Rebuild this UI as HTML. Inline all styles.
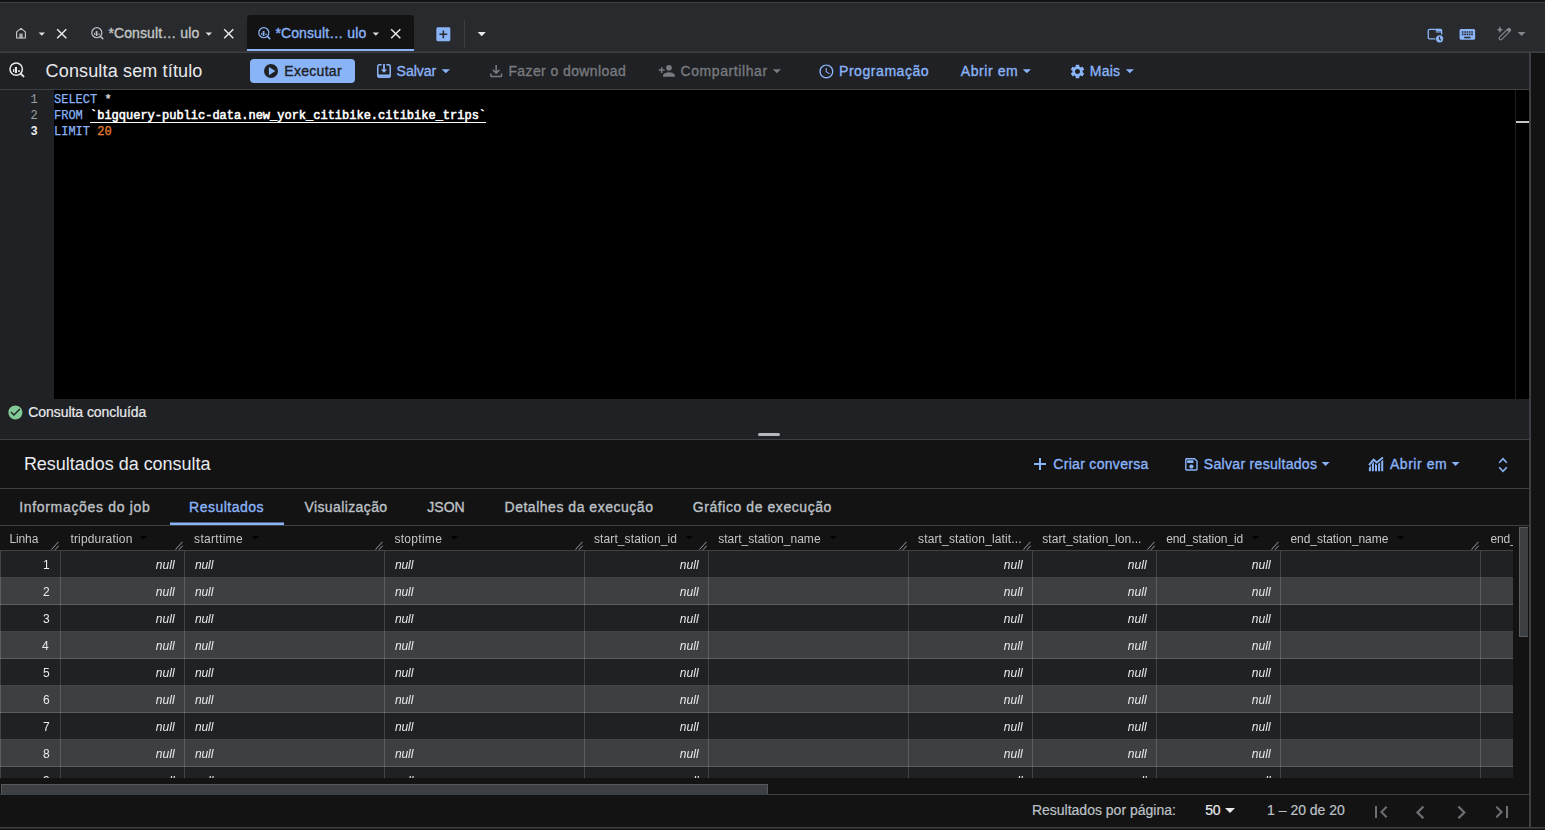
<!DOCTYPE html>
<html lang="pt-BR"><head><meta charset="utf-8"><title>BigQuery</title>
<style>
html,body{margin:0;padding:0;background:#131314;}
body{width:1545px;height:830px;position:relative;overflow:hidden;font-family:"Liberation Sans",sans-serif;}
.r{position:absolute;display:block;}
.t{position:absolute;white-space:pre;line-height:1em;font-family:"Liberation Sans",sans-serif;}
#tbl{position:absolute;left:0;top:526px;width:1513px;height:252px;overflow:hidden;will-change:transform;}
#tbl>div{position:absolute;left:0;top:-526px;width:1700px;height:830px;}
</style></head><body>

<div class="r" style="left:0px;top:0px;width:1545px;height:830px;background:#131314;"></div>
<div class="r" style="left:0px;top:2px;width:1545px;height:1px;background:#3c4043;"></div>
<div class="r" style="left:0px;top:3px;width:1545px;height:48px;background:#292a2d;"></div>
<div class="r" style="left:0px;top:51px;width:1545px;height:1px;background:#333538;"></div>
<div class="r" style="left:0px;top:52px;width:1545px;height:1px;background:#3c4043;"></div>
<div class="r" style="left:0px;top:53px;width:1529px;height:36px;background:#202124;"></div>
<div class="r" style="left:0px;top:89px;width:1529px;height:1px;background:#3c4043;"></div>
<div class="r" style="left:0px;top:90px;width:54px;height:309px;background:#202124;"></div>
<div class="r" style="left:54px;top:90px;width:1475px;height:309px;background:#000;"></div>
<div class="r" style="left:1515px;top:90px;width:1px;height:309px;background:#1f1f1f;"></div>
<div class="r" style="left:1516px;top:121px;width:13px;height:2px;background:#c4c4c4;"></div>
<div class="r" style="left:0px;top:399px;width:1529px;height:40px;background:#202124;"></div>
<div class="r" style="left:758px;top:433px;width:22px;height:3px;background:#b4b8be;border-radius:1.5px"></div>
<div class="r" style="left:0px;top:439px;width:1529px;height:1px;background:#3c4043;"></div>
<div class="r" style="left:0px;top:488px;width:1529px;height:1px;background:#3c4043;"></div>
<div class="r" style="left:0px;top:525px;width:1529px;height:1px;background:#3c4043;"></div>
<div class="r" style="left:1529px;top:53px;width:2px;height:775px;background:#3c4043;"></div>
<div class="r" style="left:1531px;top:53px;width:14px;height:775px;background:#131313;"></div>
<div class="r" style="left:247px;top:15px;width:167px;height:36px;background:#131313;border-radius:4px 4px 0 0"></div>
<div class="r" style="left:247px;top:49px;width:167px;height:2px;background:#8ab4f8;"></div>
<div class="r" style="left:464px;top:20px;width:1px;height:28px;background:#3c4043;"></div>
<div class="r" style="left:250px;top:59px;width:105px;height:24px;background:#8ab4f8;border-radius:4px"></div>
<div class="r" style="left:170px;top:522px;width:114px;height:1px;background:#4f6486;"></div>
<div class="r" style="left:170px;top:523px;width:114px;height:2px;background:#8ab4f8;"></div>
<div class="r" style="left:90px;top:122px;width:396px;height:1px;background:#ffffff;"></div>
<div class="r" style="left:1034px;top:463px;width:12px;height:2px;background:#8ab4f8;"></div>
<div class="r" style="left:1039px;top:458px;width:2px;height:12px;background:#8ab4f8;"></div>
<div class="r" style="left:1519px;top:527px;width:9px;height:110px;background:#5a5e62;"></div>
<div class="r" style="left:1520px;top:528px;width:8px;height:108px;background:#3c4043;"></div>
<div class="r" style="left:1px;top:784px;width:767px;height:10px;background:#55595d;"></div>
<div class="r" style="left:2px;top:785px;width:765px;height:9px;background:#3c4043;"></div>
<div class="r" style="left:0px;top:794px;width:1529px;height:1px;background:#3c4043;"></div>
<div class="r" style="left:0px;top:827px;width:1545px;height:1px;background:#3c4043;"></div>
<div class="r" style="left:0px;top:828px;width:1545px;height:1px;background:#27292b;"></div>
<div id="tbl"><div>
<div class="r" style="left:0px;top:550px;width:1513px;height:1px;background:#202124;"></div>
<div class="r" style="left:0px;top:551px;width:1513px;height:26px;background:#202124;"></div>
<div class="r" style="left:0px;top:550px;width:1513px;height:1px;background:rgba(255,255,255,0.155);"></div>
<div class="r" style="left:0px;top:577px;width:1513px;height:1px;background:#202124;"></div>
<div class="r" style="left:0px;top:578px;width:1513px;height:26px;background:#3c4043;"></div>
<div class="r" style="left:0px;top:577px;width:1513px;height:1px;background:rgba(255,255,255,0.155);"></div>
<div class="r" style="left:0px;top:604px;width:1513px;height:1px;background:#3c4043;"></div>
<div class="r" style="left:0px;top:605px;width:1513px;height:26px;background:#202124;"></div>
<div class="r" style="left:0px;top:604px;width:1513px;height:1px;background:rgba(255,255,255,0.155);"></div>
<div class="r" style="left:0px;top:631px;width:1513px;height:1px;background:#202124;"></div>
<div class="r" style="left:0px;top:632px;width:1513px;height:26px;background:#3c4043;"></div>
<div class="r" style="left:0px;top:631px;width:1513px;height:1px;background:rgba(255,255,255,0.155);"></div>
<div class="r" style="left:0px;top:658px;width:1513px;height:1px;background:#3c4043;"></div>
<div class="r" style="left:0px;top:659px;width:1513px;height:26px;background:#202124;"></div>
<div class="r" style="left:0px;top:658px;width:1513px;height:1px;background:rgba(255,255,255,0.155);"></div>
<div class="r" style="left:0px;top:685px;width:1513px;height:1px;background:#202124;"></div>
<div class="r" style="left:0px;top:686px;width:1513px;height:26px;background:#3c4043;"></div>
<div class="r" style="left:0px;top:685px;width:1513px;height:1px;background:rgba(255,255,255,0.155);"></div>
<div class="r" style="left:0px;top:712px;width:1513px;height:1px;background:#3c4043;"></div>
<div class="r" style="left:0px;top:713px;width:1513px;height:26px;background:#202124;"></div>
<div class="r" style="left:0px;top:712px;width:1513px;height:1px;background:rgba(255,255,255,0.155);"></div>
<div class="r" style="left:0px;top:739px;width:1513px;height:1px;background:#202124;"></div>
<div class="r" style="left:0px;top:740px;width:1513px;height:26px;background:#3c4043;"></div>
<div class="r" style="left:0px;top:739px;width:1513px;height:1px;background:rgba(255,255,255,0.155);"></div>
<div class="r" style="left:0px;top:766px;width:1513px;height:1px;background:#3c4043;"></div>
<div class="r" style="left:0px;top:767px;width:1513px;height:26px;background:#202124;"></div>
<div class="r" style="left:0px;top:766px;width:1513px;height:1px;background:rgba(255,255,255,0.155);"></div>
<div class="r" style="left:0px;top:793px;width:1513px;height:1px;background:#202124;"></div>
<div class="r" style="left:0px;top:794px;width:1513px;height:26px;background:#3c4043;"></div>
<div class="r" style="left:0px;top:793px;width:1513px;height:1px;background:rgba(255,255,255,0.155);"></div>
<div class="r" style="left:60px;top:551px;width:1px;height:227px;background:rgba(255,255,255,0.155);"></div>
<div class="r" style="left:184px;top:551px;width:1px;height:227px;background:rgba(255,255,255,0.155);"></div>
<div class="r" style="left:384px;top:551px;width:1px;height:227px;background:rgba(255,255,255,0.155);"></div>
<div class="r" style="left:584px;top:551px;width:1px;height:227px;background:rgba(255,255,255,0.155);"></div>
<div class="r" style="left:708px;top:551px;width:1px;height:227px;background:rgba(255,255,255,0.155);"></div>
<div class="r" style="left:908px;top:551px;width:1px;height:227px;background:rgba(255,255,255,0.155);"></div>
<div class="r" style="left:1032px;top:551px;width:1px;height:227px;background:rgba(255,255,255,0.155);"></div>
<div class="r" style="left:1156px;top:551px;width:1px;height:227px;background:rgba(255,255,255,0.155);"></div>
<div class="r" style="left:1280px;top:551px;width:1px;height:227px;background:rgba(255,255,255,0.155);"></div>
<div class="r" style="left:1480px;top:551px;width:1px;height:227px;background:rgba(255,255,255,0.155);"></div>
<div class="r" style="left:0px;top:551px;width:1px;height:227px;background:rgba(255,255,255,0.155);"></div>
<span class="t" style="top:559px;color:#e8eaed;font-size:12px;left:42.90px;">1</span>
<span class="t" style="top:559px;color:#e8eaed;font-size:12px;font-style:italic;left:155.70px;letter-spacing:0.100px;">null</span>
<span class="t" style="top:559px;color:#e8eaed;font-size:12px;font-style:italic;left:194.90px;letter-spacing:-0.067px;">null</span>
<span class="t" style="top:559px;color:#e8eaed;font-size:12px;font-style:italic;left:394.90px;letter-spacing:-0.067px;">null</span>
<span class="t" style="top:559px;color:#e8eaed;font-size:12px;font-style:italic;left:679.70px;letter-spacing:0.100px;">null</span>
<span class="t" style="top:559px;color:#e8eaed;font-size:12px;font-style:italic;left:1003.70px;letter-spacing:0.100px;">null</span>
<span class="t" style="top:559px;color:#e8eaed;font-size:12px;font-style:italic;left:1127.70px;letter-spacing:0.100px;">null</span>
<span class="t" style="top:559px;color:#e8eaed;font-size:12px;font-style:italic;left:1251.70px;letter-spacing:0.100px;">null</span>
<span class="t" style="top:586px;color:#e8eaed;font-size:12px;left:42.90px;">2</span>
<span class="t" style="top:586px;color:#e8eaed;font-size:12px;font-style:italic;left:155.70px;letter-spacing:0.100px;">null</span>
<span class="t" style="top:586px;color:#e8eaed;font-size:12px;font-style:italic;left:194.90px;letter-spacing:-0.067px;">null</span>
<span class="t" style="top:586px;color:#e8eaed;font-size:12px;font-style:italic;left:394.90px;letter-spacing:-0.067px;">null</span>
<span class="t" style="top:586px;color:#e8eaed;font-size:12px;font-style:italic;left:679.70px;letter-spacing:0.100px;">null</span>
<span class="t" style="top:586px;color:#e8eaed;font-size:12px;font-style:italic;left:1003.70px;letter-spacing:0.100px;">null</span>
<span class="t" style="top:586px;color:#e8eaed;font-size:12px;font-style:italic;left:1127.70px;letter-spacing:0.100px;">null</span>
<span class="t" style="top:586px;color:#e8eaed;font-size:12px;font-style:italic;left:1251.70px;letter-spacing:0.100px;">null</span>
<span class="t" style="top:613px;color:#e8eaed;font-size:12px;left:42.90px;">3</span>
<span class="t" style="top:613px;color:#e8eaed;font-size:12px;font-style:italic;left:155.70px;letter-spacing:0.100px;">null</span>
<span class="t" style="top:613px;color:#e8eaed;font-size:12px;font-style:italic;left:194.90px;letter-spacing:-0.067px;">null</span>
<span class="t" style="top:613px;color:#e8eaed;font-size:12px;font-style:italic;left:394.90px;letter-spacing:-0.067px;">null</span>
<span class="t" style="top:613px;color:#e8eaed;font-size:12px;font-style:italic;left:679.70px;letter-spacing:0.100px;">null</span>
<span class="t" style="top:613px;color:#e8eaed;font-size:12px;font-style:italic;left:1003.70px;letter-spacing:0.100px;">null</span>
<span class="t" style="top:613px;color:#e8eaed;font-size:12px;font-style:italic;left:1127.70px;letter-spacing:0.100px;">null</span>
<span class="t" style="top:613px;color:#e8eaed;font-size:12px;font-style:italic;left:1251.70px;letter-spacing:0.100px;">null</span>
<span class="t" style="top:640px;color:#e8eaed;font-size:12px;left:41.90px;">4</span>
<span class="t" style="top:640px;color:#e8eaed;font-size:12px;font-style:italic;left:155.70px;letter-spacing:0.100px;">null</span>
<span class="t" style="top:640px;color:#e8eaed;font-size:12px;font-style:italic;left:194.90px;letter-spacing:-0.067px;">null</span>
<span class="t" style="top:640px;color:#e8eaed;font-size:12px;font-style:italic;left:394.90px;letter-spacing:-0.067px;">null</span>
<span class="t" style="top:640px;color:#e8eaed;font-size:12px;font-style:italic;left:679.70px;letter-spacing:0.100px;">null</span>
<span class="t" style="top:640px;color:#e8eaed;font-size:12px;font-style:italic;left:1003.70px;letter-spacing:0.100px;">null</span>
<span class="t" style="top:640px;color:#e8eaed;font-size:12px;font-style:italic;left:1127.70px;letter-spacing:0.100px;">null</span>
<span class="t" style="top:640px;color:#e8eaed;font-size:12px;font-style:italic;left:1251.70px;letter-spacing:0.100px;">null</span>
<span class="t" style="top:667px;color:#e8eaed;font-size:12px;left:42.90px;">5</span>
<span class="t" style="top:667px;color:#e8eaed;font-size:12px;font-style:italic;left:155.70px;letter-spacing:0.100px;">null</span>
<span class="t" style="top:667px;color:#e8eaed;font-size:12px;font-style:italic;left:194.90px;letter-spacing:-0.067px;">null</span>
<span class="t" style="top:667px;color:#e8eaed;font-size:12px;font-style:italic;left:394.90px;letter-spacing:-0.067px;">null</span>
<span class="t" style="top:667px;color:#e8eaed;font-size:12px;font-style:italic;left:679.70px;letter-spacing:0.100px;">null</span>
<span class="t" style="top:667px;color:#e8eaed;font-size:12px;font-style:italic;left:1003.70px;letter-spacing:0.100px;">null</span>
<span class="t" style="top:667px;color:#e8eaed;font-size:12px;font-style:italic;left:1127.70px;letter-spacing:0.100px;">null</span>
<span class="t" style="top:667px;color:#e8eaed;font-size:12px;font-style:italic;left:1251.70px;letter-spacing:0.100px;">null</span>
<span class="t" style="top:694px;color:#e8eaed;font-size:12px;left:42.90px;">6</span>
<span class="t" style="top:694px;color:#e8eaed;font-size:12px;font-style:italic;left:155.70px;letter-spacing:0.100px;">null</span>
<span class="t" style="top:694px;color:#e8eaed;font-size:12px;font-style:italic;left:194.90px;letter-spacing:-0.067px;">null</span>
<span class="t" style="top:694px;color:#e8eaed;font-size:12px;font-style:italic;left:394.90px;letter-spacing:-0.067px;">null</span>
<span class="t" style="top:694px;color:#e8eaed;font-size:12px;font-style:italic;left:679.70px;letter-spacing:0.100px;">null</span>
<span class="t" style="top:694px;color:#e8eaed;font-size:12px;font-style:italic;left:1003.70px;letter-spacing:0.100px;">null</span>
<span class="t" style="top:694px;color:#e8eaed;font-size:12px;font-style:italic;left:1127.70px;letter-spacing:0.100px;">null</span>
<span class="t" style="top:694px;color:#e8eaed;font-size:12px;font-style:italic;left:1251.70px;letter-spacing:0.100px;">null</span>
<span class="t" style="top:721px;color:#e8eaed;font-size:12px;left:42.90px;">7</span>
<span class="t" style="top:721px;color:#e8eaed;font-size:12px;font-style:italic;left:155.70px;letter-spacing:0.100px;">null</span>
<span class="t" style="top:721px;color:#e8eaed;font-size:12px;font-style:italic;left:194.90px;letter-spacing:-0.067px;">null</span>
<span class="t" style="top:721px;color:#e8eaed;font-size:12px;font-style:italic;left:394.90px;letter-spacing:-0.067px;">null</span>
<span class="t" style="top:721px;color:#e8eaed;font-size:12px;font-style:italic;left:679.70px;letter-spacing:0.100px;">null</span>
<span class="t" style="top:721px;color:#e8eaed;font-size:12px;font-style:italic;left:1003.70px;letter-spacing:0.100px;">null</span>
<span class="t" style="top:721px;color:#e8eaed;font-size:12px;font-style:italic;left:1127.70px;letter-spacing:0.100px;">null</span>
<span class="t" style="top:721px;color:#e8eaed;font-size:12px;font-style:italic;left:1251.70px;letter-spacing:0.100px;">null</span>
<span class="t" style="top:748px;color:#e8eaed;font-size:12px;left:42.90px;">8</span>
<span class="t" style="top:748px;color:#e8eaed;font-size:12px;font-style:italic;left:155.70px;letter-spacing:0.100px;">null</span>
<span class="t" style="top:748px;color:#e8eaed;font-size:12px;font-style:italic;left:194.90px;letter-spacing:-0.067px;">null</span>
<span class="t" style="top:748px;color:#e8eaed;font-size:12px;font-style:italic;left:394.90px;letter-spacing:-0.067px;">null</span>
<span class="t" style="top:748px;color:#e8eaed;font-size:12px;font-style:italic;left:679.70px;letter-spacing:0.100px;">null</span>
<span class="t" style="top:748px;color:#e8eaed;font-size:12px;font-style:italic;left:1003.70px;letter-spacing:0.100px;">null</span>
<span class="t" style="top:748px;color:#e8eaed;font-size:12px;font-style:italic;left:1127.70px;letter-spacing:0.100px;">null</span>
<span class="t" style="top:748px;color:#e8eaed;font-size:12px;font-style:italic;left:1251.70px;letter-spacing:0.100px;">null</span>
<span class="t" style="top:775px;color:#e8eaed;font-size:12px;left:42.90px;">9</span>
<span class="t" style="top:775px;color:#e8eaed;font-size:12px;font-style:italic;left:155.70px;letter-spacing:0.100px;">null</span>
<span class="t" style="top:775px;color:#e8eaed;font-size:12px;font-style:italic;left:194.90px;letter-spacing:-0.067px;">null</span>
<span class="t" style="top:775px;color:#e8eaed;font-size:12px;font-style:italic;left:394.90px;letter-spacing:-0.067px;">null</span>
<span class="t" style="top:775px;color:#e8eaed;font-size:12px;font-style:italic;left:679.70px;letter-spacing:0.100px;">null</span>
<span class="t" style="top:775px;color:#e8eaed;font-size:12px;font-style:italic;left:1003.70px;letter-spacing:0.100px;">null</span>
<span class="t" style="top:775px;color:#e8eaed;font-size:12px;font-style:italic;left:1127.70px;letter-spacing:0.100px;">null</span>
<span class="t" style="top:775px;color:#e8eaed;font-size:12px;font-style:italic;left:1251.70px;letter-spacing:0.100px;">null</span>
<span class="t" style="top:802px;color:#e8eaed;font-size:12px;left:35.90px;">10</span>
<span class="t" style="top:802px;color:#e8eaed;font-size:12px;font-style:italic;left:155.70px;letter-spacing:0.100px;">null</span>
<span class="t" style="top:802px;color:#e8eaed;font-size:12px;font-style:italic;left:194.90px;letter-spacing:-0.067px;">null</span>
<span class="t" style="top:802px;color:#e8eaed;font-size:12px;font-style:italic;left:394.90px;letter-spacing:-0.067px;">null</span>
<span class="t" style="top:802px;color:#e8eaed;font-size:12px;font-style:italic;left:679.70px;letter-spacing:0.100px;">null</span>
<span class="t" style="top:802px;color:#e8eaed;font-size:12px;font-style:italic;left:1003.70px;letter-spacing:0.100px;">null</span>
<span class="t" style="top:802px;color:#e8eaed;font-size:12px;font-style:italic;left:1127.70px;letter-spacing:0.100px;">null</span>
<span class="t" style="top:802px;color:#e8eaed;font-size:12px;font-style:italic;left:1251.70px;letter-spacing:0.100px;">null</span>
<span class="t" style="top:533px;color:#c4c7c5;font-size:12px;left:1490.40px;letter-spacing:-0.085px;">end_station_latitude</span>
</div></div>
<svg class="r" style="left:14px;top:26px;" width="14" height="14" viewBox="0 0 24 24"><path fill="none" stroke="#c4c7c5" stroke-width="2" stroke-linejoin="round" d="M4.5 20.5V10L12 4l7.5 6v10.5z"/><path fill="#c4c7c5" d="M9 13h6v8H9z" opacity=".8"/></svg>
<svg class="r" style="left:34.25px;top:25.5px;" width="15.6" height="15.6" viewBox="0 0 24 24"><path fill="#dadce0" d="M7 10l5 5 5-5z"/></svg>
<svg class="r" style="left:53.26px;top:25.16px;" width="17.49" height="17.49" viewBox="0 0 24 24"><path fill="#e8eaed" d="M19 6.41L17.59 5 12 10.59 6.41 5 5 6.41 10.59 12 5 17.59 6.41 19 12 13.41 17.59 19 19 17.59 13.41 12z"/></svg>
<svg class="r" style="left:90.67px;top:26.75px;" width="12.96" height="12.96" viewBox="0 0 16 16"><circle cx="7.2" cy="7.1" r="6.2" fill="none" stroke="#bdc1c6" stroke-width="1.5"/><path d="M11.8 11.8L14.500 14.400" stroke="#bdc1c6" stroke-width="1.9" stroke-linecap="round"/><path fill="#bdc1c6" d="M4 7h1.200v3H4zM5.900 5h2.100v6H5.900zM9.200 8.100h1.500v1.900H9.200z"/></svg>
<svg class="r" style="left:201.15px;top:25.5px;" width="15.6" height="15.6" viewBox="0 0 24 24"><path fill="#dadce0" d="M7 10l5 5 5-5z"/></svg>
<svg class="r" style="left:220.16px;top:25.16px;" width="17.49" height="17.49" viewBox="0 0 24 24"><path fill="#e8eaed" d="M19 6.41L17.59 5 12 10.59 6.41 5 5 6.41 10.59 12 5 17.59 6.41 19 12 13.41 17.59 19 19 17.59 13.41 12z"/></svg>
<svg class="r" style="left:257.67px;top:26.75px;" width="12.96" height="12.96" viewBox="0 0 16 16"><circle cx="7.2" cy="7.1" r="6.2" fill="none" stroke="#8ab4f8" stroke-width="1.5"/><path d="M11.8 11.8L14.500 14.400" stroke="#8ab4f8" stroke-width="1.9" stroke-linecap="round"/><path fill="#8ab4f8" d="M4 7h1.200v3H4zM5.900 5h2.100v6H5.900zM9.200 8.100h1.500v1.900H9.200z"/></svg>
<svg class="r" style="left:368.25px;top:25.5px;" width="15.6" height="15.6" viewBox="0 0 24 24"><path fill="#dadce0" d="M7 10l5 5 5-5z"/></svg>
<svg class="r" style="left:387.26px;top:25.16px;" width="17.49" height="17.49" viewBox="0 0 24 24"><path fill="#e8eaed" d="M19 6.41L17.59 5 12 10.59 6.41 5 5 6.41 10.59 12 5 17.59 6.41 19 12 13.41 17.59 19 19 17.59 13.41 12z"/></svg>
<svg class="r" style="left:433.57px;top:24.57px;" width="18.67" height="18.67" viewBox="0 0 24 24"><path fill="#8ab4f8" d="M19 3H5c-1.11 0-2 .9-2 2v14c0 1.1.89 2 2 2h14c1.1 0 2-.9 2-2V5c0-1.1-.9-2-2-2zm-2 10h-4v4h-2v-4H7v-2h4V7h2v4h4v2z"/></svg>
<svg class="r" style="left:472.13px;top:23.6px;" width="19.44" height="19.44" viewBox="0 0 24 24"><path fill="#e8eaed" d="M7 10l5 5 5-5z"/></svg>
<svg class="r" style="left:1427px;top:27.6px;" width="17" height="16" viewBox="0 0 17 16"><path fill="none" stroke="#8ab4f8" stroke-width="1.3" d="M8.6 10.95H2.6A1.35 1.35 0 0 1 1.25 9.6V2.7A1.35 1.35 0 0 1 2.6 1.35H13.3A1.35 1.35 0 0 1 14.65 2.7V6.6"/><path fill="#8ab4f8" d="M8.8 .9h5.6v2.6H8.8z"/><path fill="#8ab4f8" opacity=".55" d="M8.8 3.5h5.6v1.4H8.8z"/><circle cx="12.6" cy="10.8" r="3.6" fill="#8ab4f8"/><path d="M12.5 8.7v2.3l1.5 1.3" stroke="#292a2d" stroke-width="1.1" fill="none"/></svg>
<svg class="r" style="left:1457.64px;top:24.8px;" width="18.72" height="18.72" viewBox="0 0 24 24"><path fill="#8ab4f8" d="M20 5H4c-1.1 0-1.99.9-1.99 2L2 17c0 1.1.9 2 2 2h16c1.1 0 2-.9 2-2V7c0-1.1-.9-2-2-2zm-9 3h2v2h-2V8zm0 3h2v2h-2v-2zM8 8h2v2H8V8zm0 3h2v2H8v-2zm-1 2H5v-2h2v2zm0-3H5V8h2v2zm9 7H8v-2h8v2zm0-4h-2v-2h2v2zm0-3h-2V8h2v2zm3 3h-2v-2h2v2zm0-3h-2V8h2v2z"/></svg>
<svg class="r" style="left:1495px;top:24px;" width="18" height="18" viewBox="0 0 18 18"><path fill="#80868b" d="M4.95 2.3000000000000003Q5.45 5.2 8.35 5.7Q5.45 6.2 4.95 9.1Q4.45 6.2 1.5500000000000003 5.7Q4.45 5.2 4.95 2.3000000000000003Z"/><g transform="translate(9.8 10.15) rotate(-45)"><rect x="-7.4" y="-1.55" width="14.8" height="3.1" rx="1.55" fill="none" stroke="#80868b" stroke-width="1.2"/><path fill="#80868b" d="M4.2 -1.55h1.700a1.550 1.550 0 0 1 0 3.100h-1.700z"/></g></svg>
<svg class="r" style="left:1512.4px;top:23.8px;" width="19.2" height="19.2" viewBox="0 0 24 24"><path fill="#80868b" d="M7 10l5 5 5-5z"/></svg>
<svg class="r" style="left:9.0px;top:62.0px;" width="16.0" height="16.0" viewBox="0 0 16 16"><circle cx="7.2" cy="7.1" r="6.2" fill="none" stroke="#e8eaed" stroke-width="1.5"/><path d="M11.8 11.8L14.500 14.400" stroke="#e8eaed" stroke-width="1.9" stroke-linecap="round"/><path fill="#e8eaed" d="M4 7h1.200v3H4zM5.900 5h2.100v6H5.900zM9.200 8.100h1.500v1.900H9.200z"/></svg>
<svg class="r" style="left:264px;top:63.9px;" width="14" height="14" viewBox="0 0 14 14"><circle cx="7" cy="7" r="7" fill="#202124"/><path fill="#8ab4f8" d="M4.9 2.9v8.4L11.4 7z"/></svg>
<svg class="r" style="left:377px;top:64px;" width="14" height="14" viewBox="0 0 14 14"><path fill="none" stroke="#8ab4f8" stroke-width="1.5" stroke-linejoin="round" d="M4.6 0.75H2.2A1.45 1.45 0 0 0 .75 2.2v9.6a1.45 1.45 0 0 0 1.45 1.45h9.6a1.45 1.45 0 0 0 1.45-1.45V2.2A1.45 1.45 0 0 0 11.8.75H9.400"/><path fill="#8ab4f8" d="M.8 10.600h12.400v2.200H.8zM6.100 0h1.800v5.400h2.300L7 8.800 3.800 5.400h2.300z"/></svg>
<svg class="r" style="left:436.26px;top:60.5px;" width="19.68" height="19.68" viewBox="0 0 24 24"><path fill="#8ab4f8" d="M7 10l5 5 5-5z"/></svg>
<svg class="r" style="left:486.7px;top:61.8px;" width="18.4" height="18.4" viewBox="0 0 24 24"><path fill="#777a7f" d="M18 15v3H6v-3H4v3c0 1.1.9 2 2 2h12c1.1 0 2-.9 2-2v-3h-2zm-1-4l-1.41-1.41L13 12.17V4h-2v8.17L8.41 9.59 7 11l5 5 5-5z"/></svg>
<svg class="r" style="left:658.4px;top:62px;" width="17.6" height="17.6" viewBox="0 0 24 24"><path fill="#777a7f" d="M15 12c2.21 0 4-1.79 4-4s-1.79-4-4-4-4 1.79-4 4 1.79 4 4 4zm-9-2V7H4v3H1v2h3v3h2v-3h3v-2H6zm9 4c-2.67 0-8 1.34-8 4v2h16v-2c0-2.66-5.33-4-8-4z"/></svg>
<svg class="r" style="left:767.26px;top:60.5px;" width="19.68" height="19.68" viewBox="0 0 24 24"><path fill="#777a7f" d="M7 10l5 5 5-5z"/></svg>
<svg class="r" style="left:818.4px;top:62.6px;" width="16.8" height="16.8" viewBox="0 0 24 24"><path fill="#8ab4f8" d="M11.99 2C6.47 2 2 6.48 2 12s4.47 10 9.99 10C17.52 22 22 17.52 22 12S17.52 2 11.99 2zM12 20c-4.42 0-8-3.58-8-8s3.58-8 8-8 8 3.58 8 8-3.58 8-8 8zm.5-13H11v6l5.25 3.15.75-1.23-4.5-2.67z"/></svg>
<svg class="r" style="left:1017.26px;top:60.5px;" width="19.68" height="19.68" viewBox="0 0 24 24"><path fill="#8ab4f8" d="M7 10l5 5 5-5z"/></svg>
<svg class="r" style="left:1068.5px;top:62.5px;" width="17" height="17" viewBox="0 0 24 24"><path fill="#8ab4f8" d="M19.14 12.94c.04-.3.06-.61.06-.94 0-.32-.02-.64-.07-.94l2.03-1.58c.18-.14.23-.41.12-.61l-1.92-3.32c-.12-.22-.37-.29-.59-.22l-2.39.96c-.5-.38-1.03-.7-1.62-.94l-.36-2.54c-.04-.24-.24-.41-.48-.41h-3.84c-.24 0-.43.17-.47.41l-.36 2.54c-.59.24-1.13.57-1.62.94l-2.39-.96c-.22-.08-.47 0-.59.22L2.74 8.87c-.12.21-.08.47.12.61l2.03 1.58c-.05.3-.09.63-.09.94s.02.64.07.94l-2.03 1.58c-.18.14-.23.41-.12.61l1.92 3.32c.12.22.37.29.59.22l2.39-.96c.5.38 1.03.7 1.62.94l.36 2.54c.05.24.24.41.48.41h3.84c.24 0 .44-.17.47-.41l.36-2.54c.59-.24 1.13-.56 1.62-.94l2.39.96c.22.08.47 0 .59-.22l1.92-3.32c.12-.22.07-.47-.12-.61l-2.01-1.58zM12 15.6c-1.98 0-3.6-1.62-3.6-3.6s1.62-3.6 3.6-3.6 3.6 1.62 3.6 3.6-1.62 3.6-3.6 3.6z"/></svg>
<svg class="r" style="left:1120.26px;top:60.5px;" width="19.68" height="19.68" viewBox="0 0 24 24"><path fill="#8ab4f8" d="M7 10l5 5 5-5z"/></svg>
<svg class="r" style="left:6.6px;top:403.6px;" width="16.8" height="16.8" viewBox="0 0 24 24"><path fill="#81c995" d="M12 2C6.48 2 2 6.48 2 12s4.48 10 10 10 10-4.48 10-10S17.52 2 12 2zm-2 15l-5-5 1.41-1.41L10 14.17l7.59-7.59L19 8l-9 9z"/></svg>
<svg class="r" style="left:1182.6px;top:455.7px;" width="16.8" height="16.8" viewBox="0 0 24 24"><path fill="#8ab4f8" d="M17 3H5c-1.11 0-2 .9-2 2v14c0 1.1.89 2 2 2h14c1.1 0 2-.9 2-2V7l-4-4zm2 16H5V5h11.17L19 7.83V19zm-7-7c-1.66 0-3 1.34-3 3s1.34 3 3 3 3-1.34 3-3-1.34-3-3-3zM6 6h9v4H6z"/></svg>
<svg class="r" style="left:1316.4px;top:453.8px;" width="19.2" height="19.2" viewBox="0 0 24 24"><path fill="#8ab4f8" d="M7 10l5 5 5-5z"/></svg>
<svg class="r" style="left:1368px;top:456px;" width="16" height="16" viewBox="0 0 16 16"><path fill="#8ab4f8" d="M.9 0h2v15.200h-2zM3.900 0h2v15.200h-2zM7 0h2v15.200H7zM10.100 0h2v15.200h-2zM13.200 0h2v15.200h-2z"/><path fill="#131314" d="M0 0H16V3.100L14.900 4L8.700 9L5.600 6.100L1 11.700L0 12.900Z"/><path fill="none" stroke="#8ab4f8" stroke-width="1.9" d="M1 9.200L5.600 3.600L8.700 6.500L14.900 1.400"/></svg>
<svg class="r" style="left:1446.4px;top:453.8px;" width="19.2" height="19.2" viewBox="0 0 24 24"><path fill="#8ab4f8" d="M7 10l5 5 5-5z"/></svg>
<svg class="r" style="left:1496px;top:456px;" width="14" height="18" viewBox="0 0 14 18"><path fill="none" stroke="#8ab4f8" stroke-width="1.6" d="M3.200 6.700L7 2.700l3.800 4M3.200 11.300L7 15.400l3.800-4.100"/></svg>
<svg class="r" style="left:135.4px;top:529.1px;" width="16.8" height="16.8" viewBox="0 0 24 24"><path fill="#000000" d="M7 10l5 5 5-5z"/></svg>
<svg class="r" style="left:246.7px;top:529.1px;" width="16.8" height="16.8" viewBox="0 0 24 24"><path fill="#000000" d="M7 10l5 5 5-5z"/></svg>
<svg class="r" style="left:445.6px;top:529.1px;" width="16.8" height="16.8" viewBox="0 0 24 24"><path fill="#000000" d="M7 10l5 5 5-5z"/></svg>
<svg class="r" style="left:680.6px;top:529.1px;" width="16.8" height="16.8" viewBox="0 0 24 24"><path fill="#000000" d="M7 10l5 5 5-5z"/></svg>
<svg class="r" style="left:824.6px;top:529.1px;" width="16.8" height="16.8" viewBox="0 0 24 24"><path fill="#000000" d="M7 10l5 5 5-5z"/></svg>
<svg class="r" style="left:1247.2px;top:529.1px;" width="16.8" height="16.8" viewBox="0 0 24 24"><path fill="#000000" d="M7 10l5 5 5-5z"/></svg>
<svg class="r" style="left:1391.7px;top:529.1px;" width="16.8" height="16.8" viewBox="0 0 24 24"><path fill="#000000" d="M7 10l5 5 5-5z"/></svg>
<svg class="r" style="left:51px;top:541px;" width="8" height="9" viewBox="0 0 8 9"><path d="M0.500 8.500L7.500 0.800M4 8.800L7.800 4.600" stroke="#9aa0a6" stroke-width="1" fill="none"/></svg>
<svg class="r" style="left:175px;top:541px;" width="8" height="9" viewBox="0 0 8 9"><path d="M0.500 8.500L7.500 0.800M4 8.800L7.800 4.600" stroke="#9aa0a6" stroke-width="1" fill="none"/></svg>
<svg class="r" style="left:375px;top:541px;" width="8" height="9" viewBox="0 0 8 9"><path d="M0.500 8.500L7.500 0.800M4 8.800L7.800 4.600" stroke="#9aa0a6" stroke-width="1" fill="none"/></svg>
<svg class="r" style="left:575px;top:541px;" width="8" height="9" viewBox="0 0 8 9"><path d="M0.500 8.500L7.500 0.800M4 8.800L7.800 4.600" stroke="#9aa0a6" stroke-width="1" fill="none"/></svg>
<svg class="r" style="left:699px;top:541px;" width="8" height="9" viewBox="0 0 8 9"><path d="M0.500 8.500L7.500 0.800M4 8.800L7.800 4.600" stroke="#9aa0a6" stroke-width="1" fill="none"/></svg>
<svg class="r" style="left:899px;top:541px;" width="8" height="9" viewBox="0 0 8 9"><path d="M0.500 8.500L7.500 0.800M4 8.800L7.800 4.600" stroke="#9aa0a6" stroke-width="1" fill="none"/></svg>
<svg class="r" style="left:1023px;top:541px;" width="8" height="9" viewBox="0 0 8 9"><path d="M0.500 8.500L7.500 0.800M4 8.800L7.800 4.600" stroke="#9aa0a6" stroke-width="1" fill="none"/></svg>
<svg class="r" style="left:1147px;top:541px;" width="8" height="9" viewBox="0 0 8 9"><path d="M0.500 8.500L7.500 0.800M4 8.800L7.800 4.600" stroke="#9aa0a6" stroke-width="1" fill="none"/></svg>
<svg class="r" style="left:1271px;top:541px;" width="8" height="9" viewBox="0 0 8 9"><path d="M0.500 8.500L7.500 0.800M4 8.800L7.800 4.600" stroke="#9aa0a6" stroke-width="1" fill="none"/></svg>
<svg class="r" style="left:1471px;top:541px;" width="8" height="9" viewBox="0 0 8 9"><path d="M0.500 8.500L7.500 0.800M4 8.800L7.800 4.600" stroke="#9aa0a6" stroke-width="1" fill="none"/></svg>
<svg class="r" style="left:1218.0px;top:798.0px;" width="24.0" height="24.0" viewBox="0 0 24 24"><path fill="#e8eaed" d="M7 10l5 5 5-5z"/></svg>
<svg class="r" style="left:1368.9px;top:799.9px;" width="24" height="24" viewBox="0 0 24 24"><path fill="#6e7073" d="M18.41 16.59L13.82 12l4.59-4.59L17 6l-6 6 6 6zM6 6h2v12H6z"/></svg>
<svg class="r" style="left:1407.26px;top:798.5px;" width="26.8" height="26.8" viewBox="0 0 24 24"><path fill="#6e7073" d="M15.41 7.41L14 6l-6 6 6 6 1.41-1.41L10.83 12z"/></svg>
<svg class="r" style="left:1447.7px;top:798.5px;" width="26.8" height="26.8" viewBox="0 0 24 24"><path fill="#6e7073" d="M10 6L8.59 7.41 13.17 12l-4.58 4.59L10 18l6-6z"/></svg>
<svg class="r" style="left:1489.7px;top:799.9px;" width="24" height="24" viewBox="0 0 24 24"><path fill="#6e7073" d="M5.59 7.41L10.18 12l-4.59 4.59L7 18l6-6-6-6zM16 6h2v12h-2z"/></svg>
<span class="t" style="top:26px;color:#c4c7c5;font-size:14px;-webkit-text-stroke:0.35px currentColor;left:108.40px;letter-spacing:0.108px;">*Consult… ulo</span>
<span class="t" style="top:26px;color:#8ab4f8;font-size:14px;-webkit-text-stroke:0.35px currentColor;left:275.40px;letter-spacing:0.108px;">*Consult… ulo</span>
<span class="t" style="top:62px;color:#e8eaed;font-size:18px;left:45.60px;letter-spacing:0.150px;">Consulta sem título</span>
<span class="t" style="top:64px;color:#202124;font-size:14px;-webkit-text-stroke:0.35px currentColor;left:284.30px;letter-spacing:0.286px;">Executar</span>
<span class="t" style="top:64px;color:#8ab4f8;font-size:14px;-webkit-text-stroke:0.35px currentColor;left:396.60px;">Salvar</span>
<span class="t" style="top:64px;color:#777a7f;font-size:14px;-webkit-text-stroke:0.35px currentColor;left:508.40px;letter-spacing:0.400px;">Fazer o download</span>
<span class="t" style="top:64px;color:#777a7f;font-size:14px;-webkit-text-stroke:0.35px currentColor;left:680.50px;letter-spacing:0.591px;">Compartilhar</span>
<span class="t" style="top:64px;color:#8ab4f8;font-size:14px;-webkit-text-stroke:0.35px currentColor;left:839.00px;letter-spacing:0.560px;">Programação</span>
<span class="t" style="top:64px;color:#8ab4f8;font-size:14px;-webkit-text-stroke:0.35px currentColor;left:960.80px;letter-spacing:0.571px;">Abrir em</span>
<span class="t" style="top:64px;color:#8ab4f8;font-size:14px;-webkit-text-stroke:0.35px currentColor;left:1089.80px;letter-spacing:0.200px;">Mais</span>
<span class="t" style="top:94px;color:#8ab4f8;font-size:12px;font-family:'Liberation Mono',monospace;-webkit-text-stroke:0.25px currentColor;left:54.00px;">SELECT</span>
<span class="t" style="top:94px;color:#e8eaed;font-size:12px;font-family:'Liberation Mono',monospace;-webkit-text-stroke:0.25px currentColor;left:104.40px;">*</span>
<span class="t" style="top:110px;color:#8ab4f8;font-size:12px;font-family:'Liberation Mono',monospace;-webkit-text-stroke:0.25px currentColor;left:54.00px;">FROM</span>
<span class="t" style="top:110px;color:#ffffff;font-size:12px;font-family:'Liberation Mono',monospace;-webkit-text-stroke:0.55px #fff;left:90.00px;">`bigquery-public-data.new_york_citibike.citibike_trips`</span>
<span class="t" style="top:126px;color:#8ab4f8;font-size:12px;font-family:'Liberation Mono',monospace;-webkit-text-stroke:0.25px currentColor;left:54.00px;">LIMIT</span>
<span class="t" style="top:126px;color:#ee8133;font-size:12px;font-family:'Liberation Mono',monospace;-webkit-text-stroke:0.25px currentColor;left:97.20px;">20</span>
<span class="t" style="top:94px;color:#9aa0a6;font-size:12px;font-family:'Liberation Mono',monospace;left:30.50px;">1</span>
<span class="t" style="top:110px;color:#9aa0a6;font-size:12px;font-family:'Liberation Mono',monospace;left:30.50px;">2</span>
<span class="t" style="top:126px;color:#e8eaed;font-size:12px;font-weight:700;font-family:'Liberation Mono',monospace;left:30.50px;">3</span>
<span class="t" style="top:405px;color:#e8eaed;font-size:14px;-webkit-text-stroke:0.2px currentColor;left:28.30px;letter-spacing:-0.059px;">Consulta concluída</span>
<span class="t" style="top:455px;color:#e8eaed;font-size:18px;left:23.90px;letter-spacing:-0.024px;">Resultados da consulta</span>
<span class="t" style="top:457px;color:#8ab4f8;font-size:14px;-webkit-text-stroke:0.35px currentColor;left:1053.30px;letter-spacing:0.308px;">Criar conversa</span>
<span class="t" style="top:457px;color:#8ab4f8;font-size:14px;-webkit-text-stroke:0.35px currentColor;left:1203.80px;letter-spacing:0.312px;">Salvar resultados</span>
<span class="t" style="top:457px;color:#8ab4f8;font-size:14px;-webkit-text-stroke:0.35px currentColor;left:1389.90px;letter-spacing:0.557px;">Abrir em</span>
<span class="t" style="top:500px;color:#bdc1c6;font-size:14px;-webkit-text-stroke:0.35px currentColor;left:19.20px;letter-spacing:0.676px;">Informações do job</span>
<span class="t" style="top:500px;color:#8ab4f8;font-size:14px;-webkit-text-stroke:0.35px currentColor;left:189.10px;letter-spacing:0.478px;">Resultados</span>
<span class="t" style="top:500px;color:#bdc1c6;font-size:14px;-webkit-text-stroke:0.35px currentColor;left:304.40px;letter-spacing:0.400px;">Visualização</span>
<span class="t" style="top:500px;color:#bdc1c6;font-size:14px;-webkit-text-stroke:0.35px currentColor;left:427.20px;letter-spacing:0.067px;">JSON</span>
<span class="t" style="top:500px;color:#bdc1c6;font-size:14px;-webkit-text-stroke:0.35px currentColor;left:504.50px;letter-spacing:0.521px;">Detalhes da execução</span>
<span class="t" style="top:500px;color:#bdc1c6;font-size:14px;-webkit-text-stroke:0.35px currentColor;left:692.80px;letter-spacing:0.567px;">Gráfico de execução</span>
<span class="t" style="top:533px;color:#c4c7c5;font-size:12px;left:9.40px;letter-spacing:-0.100px;">Linha</span>
<span class="t" style="top:533px;color:#c4c7c5;font-size:12px;left:70.40px;letter-spacing:0.173px;">tripduration</span>
<span class="t" style="top:533px;color:#c4c7c5;font-size:12px;left:194.10px;letter-spacing:0.312px;">starttime</span>
<span class="t" style="top:533px;color:#c4c7c5;font-size:12px;left:394.40px;letter-spacing:0.300px;">stoptime</span>
<span class="t" style="top:533px;color:#c4c7c5;font-size:12px;left:594.00px;letter-spacing:0.100px;">start_station_id</span>
<span class="t" style="top:533px;color:#c4c7c5;font-size:12px;left:718.20px;letter-spacing:0.018px;">start_station_name</span>
<span class="t" style="top:533px;color:#c4c7c5;font-size:12px;left:918.10px;letter-spacing:0.129px;">start_station_latit...</span>
<span class="t" style="top:533px;color:#c4c7c5;font-size:12px;left:1042.30px;letter-spacing:0.053px;">start_station_lon...</span>
<span class="t" style="top:533px;color:#c4c7c5;font-size:12px;left:1166.20px;letter-spacing:-0.085px;">end_station_id</span>
<span class="t" style="top:533px;color:#c4c7c5;font-size:12px;left:1290.50px;letter-spacing:-0.060px;">end_station_name</span>
<span class="t" style="top:803px;color:#bdc1c6;font-size:14px;-webkit-text-stroke:0.2px currentColor;left:1031.90px;">Resultados por página:</span>
<span class="t" style="top:803px;color:#e8eaed;font-size:14px;-webkit-text-stroke:0.2px currentColor;left:1205.20px;letter-spacing:-0.200px;">50</span>
<span class="t" style="top:803px;color:#bdc1c6;font-size:14px;-webkit-text-stroke:0.2px currentColor;left:1267.10px;letter-spacing:-0.009px;">1 – 20 de 20</span>
</body></html>
